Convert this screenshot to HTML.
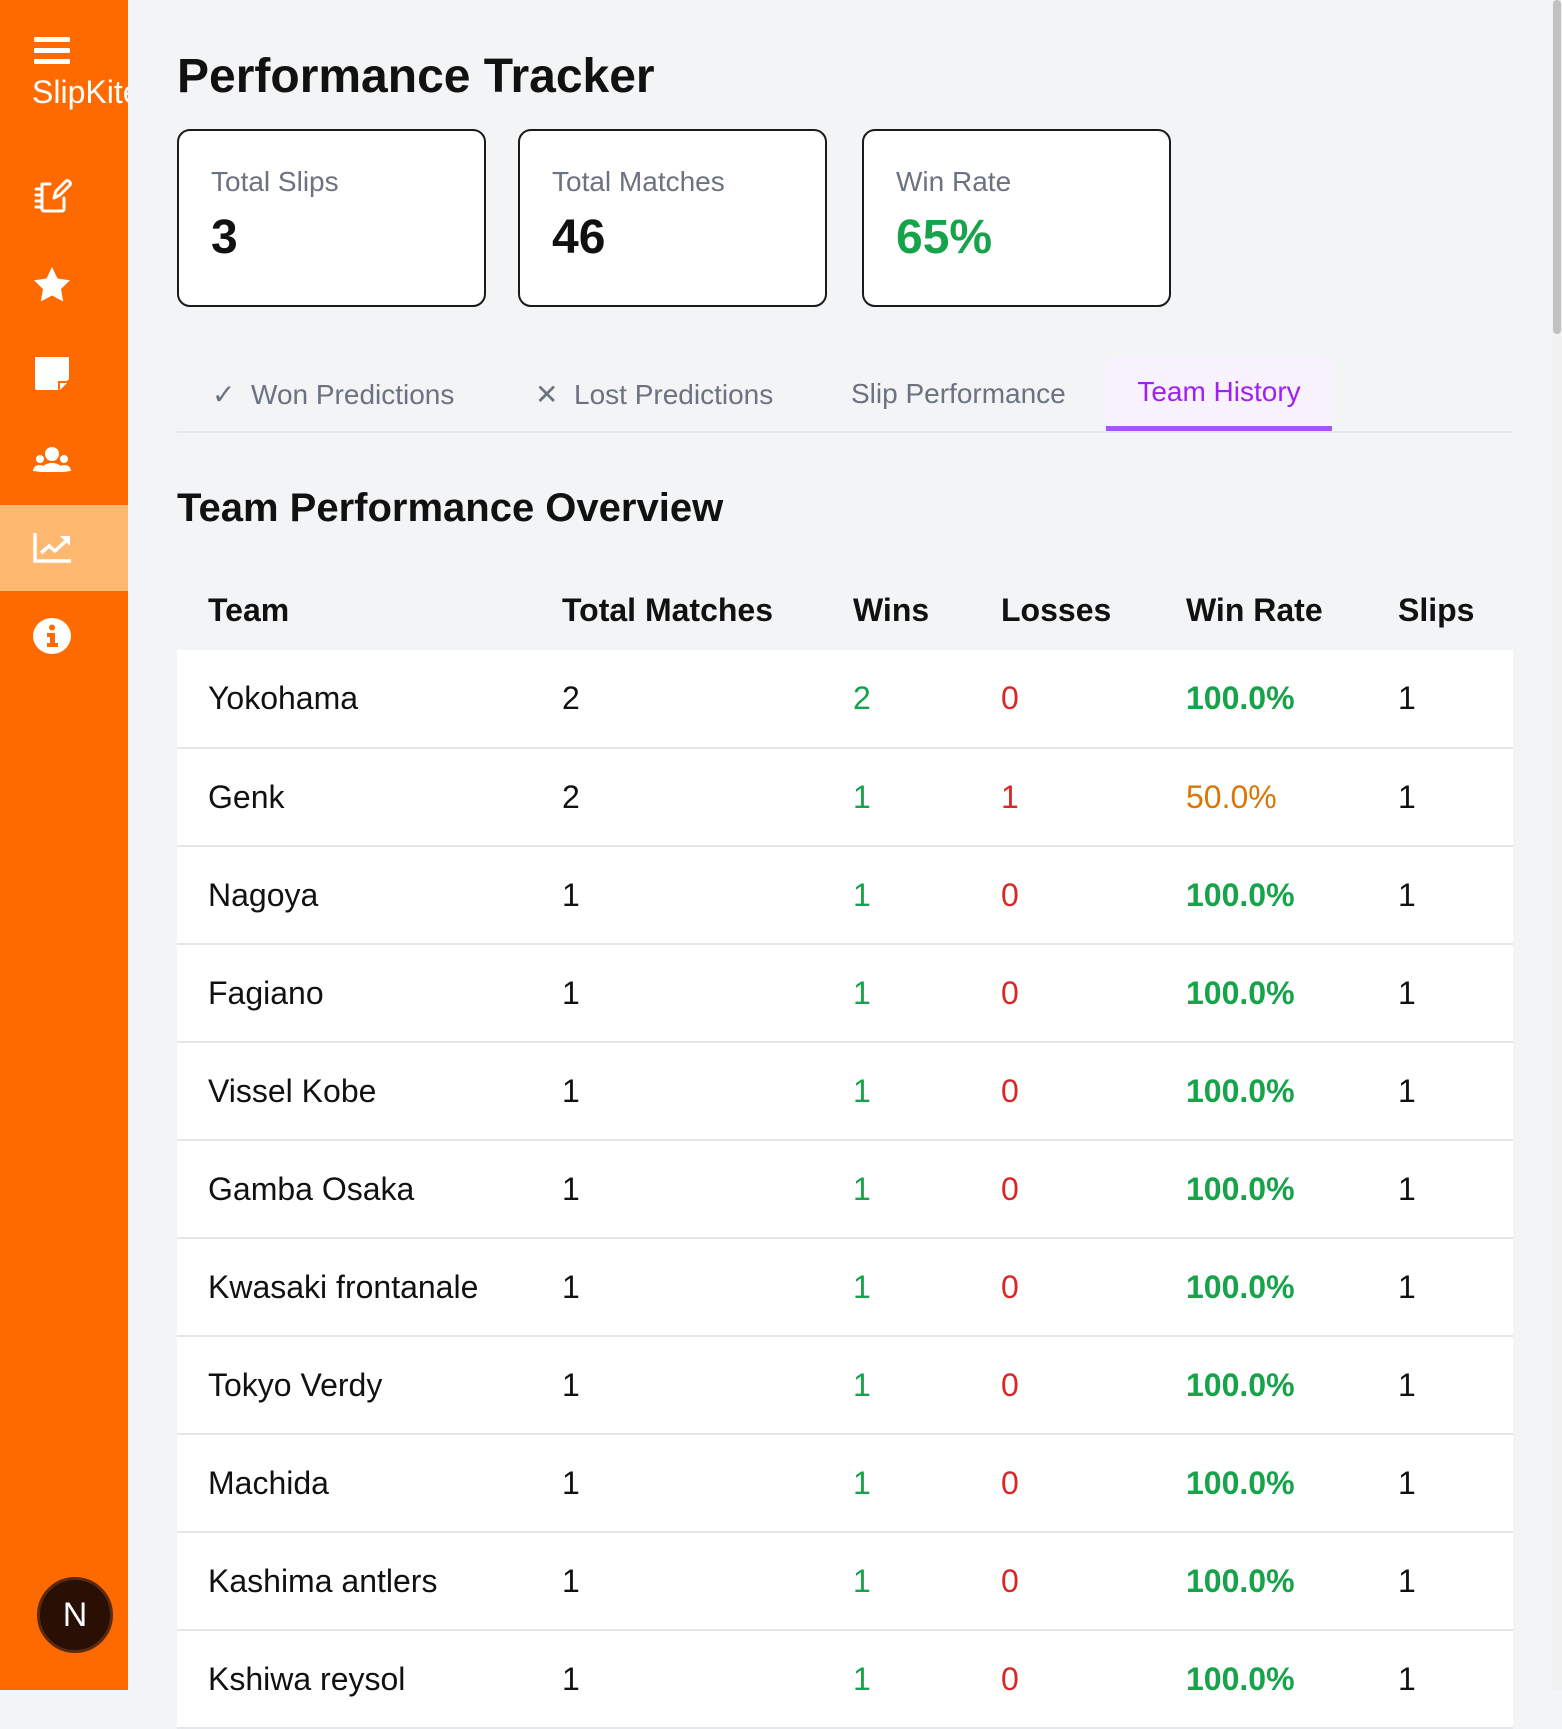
<!DOCTYPE html>
<html><head><meta charset="utf-8"><style>
*{box-sizing:border-box;margin:0;padding:0}
body{width:1562px;height:1690px;overflow:hidden;background:#f3f4f6;font-family:"Liberation Sans",sans-serif;position:relative;color:#111}
.side{position:absolute;left:0;top:0;width:128px;height:1690px;background:#ff6a00;overflow:hidden}
.ham{position:absolute;left:34px;top:37px;width:36px}
.ham i{display:block;height:5px;background:#fff;margin-bottom:6px;border-radius:1px}
.logo{position:absolute;left:32px;top:74px;color:#fff;font-size:32px;white-space:nowrap}
.ic{position:absolute;left:32px;width:40px;height:40px}
.active{position:absolute;left:0;top:505px;width:128px;height:86px;background:#ffb870}
.av{position:absolute;left:37px;top:1577px;width:76px;height:76px;border-radius:50%;background:#2a0f05;border:3px solid #5a2a10;color:#fff;font-size:34px;text-align:center;line-height:70px}
h1{position:absolute;left:177px;top:49px;font-size:48px;font-weight:bold}
.card{position:absolute;top:129px;width:309px;height:178px;background:#fff;border:2px solid #1a1a1a;border-radius:13px;padding:35px 0 0 32px}
.card .l{font-size:28px;color:#6b7280}
.card .v{font-size:48px;font-weight:bold;margin-top:12px}
.tab{position:absolute;top:378px;font-size:28px;color:#6b7280}
.tline{position:absolute;left:177px;top:431px;width:1336px;height:2px;background:#e5e7eb}
.th{position:absolute;left:1106px;top:357px;width:226px;height:74px;background:#f8f1fe;border-radius:10px 10px 0 0;border-bottom:5px solid #a855f7;color:#a020f0;font-size:28px;text-align:center;padding-top:19px}
h2{position:absolute;left:177px;top:486px;font-size:40px;font-weight:bold}
table{position:absolute;left:177px;top:574px;width:1336px;border-collapse:collapse;font-size:32px}
th{text-align:left;font-weight:bold;height:76px;padding-bottom:4px}
td{background:#fff;height:98px;border-bottom:2px solid #e5e7eb}
th:first-child,td:first-child{padding-left:31px}
.g{color:#16a34a}.r{color:#dc2626}.gb{color:#16a34a;font-weight:bold}.o{color:#d97706}
.sb{position:absolute;right:0;top:0;width:10px;height:1690px;background:#f1f1f1}
.sb i{display:block;width:8px;margin-left:1px;height:334px;background:#c1c1c1;border-radius:4px}
</style></head><body>
<div class="side">
<div class="ham"><i></i><i></i><i></i></div>
<div class="logo">SlipKite</div>
<svg class="ic" style="top:176px" viewBox="0 0 40 40" fill="none" stroke="#fff" stroke-width="3" stroke-linecap="round" stroke-linejoin="round"><path d="M10 8h8M10 8v25a2 2 0 0 0 2 2h18a2 2 0 0 0 2-2v-11"/><path d="M4 13h6M4 19h6M4 25h6M4 31h6"/><path d="M22 22l2-7 10-10a3 3 0 0 1 4 4L28 19z"/></svg>
<svg class="ic" style="top:265px" viewBox="0 0 40 40"><path fill="#fff" d="M20 2l5.5 11.5 12.5 1.7-9 8.8 2.2 12.5L20 30.5 8.8 36.5 11 24l-9-8.8 12.5-1.7z"/></svg>
<svg class="ic" style="top:353px" viewBox="0 0 40 40"><path fill="#fff" d="M3 4h34v22l-11 11H5a2 2 0 0 1-2-2z"/><path fill="#ff6a00" d="M26 37V28h9z"/><path fill="#fff" d="M28 30h7l-7 7z"/></svg>
<svg class="ic" style="top:441px" viewBox="0 0 40 40" fill="#fff"><circle cx="20" cy="13" r="7"/><circle cx="8" cy="18" r="4"/><circle cx="32" cy="18" r="4"/><path d="M9 31c0-6 5-9 11-9s11 3 11 9z"/><path d="M1 30c0-4 3-6 7-6 2 0 3 1 4 1l-3 6z"/><path d="M39 30c0-4-3-6-7-6-2 0-3 1-4 1l3 6z"/></svg>
<div class="active"></div>
<svg class="ic" style="top:528px" viewBox="0 0 40 40" fill="none" stroke="#fff" stroke-width="3.5"><path d="M3 5v28h36"/><path d="M9 25l8-7 6 5 12-11" stroke-linejoin="round"/><path fill="#fff" stroke="none" d="M28 8h10v10z"/></svg>
<svg class="ic" style="top:616px" viewBox="0 0 40 40"><ellipse cx="20" cy="20" rx="19" ry="18" fill="#fff"/><circle cx="20" cy="11.5" r="3" fill="#ff6a00"/><path fill="#ff6a00" d="M15 17h8v10h3v4H15v-4h3v-6h-3z"/></svg>
<div class="av">N</div>
</div>
<h1>Performance Tracker</h1>
<div class="card" style="left:177px"><div class="l">Total Slips</div><div class="v">3</div></div>
<div class="card" style="left:518px"><div class="l">Total Matches</div><div class="v">46</div></div>
<div class="card" style="left:862px"><div class="l">Win Rate</div><div class="v" style="color:#16a34a">65%</div></div>
<div class="tab" style="left:212px">✓&nbsp;&nbsp;Won Predictions</div>
<div class="tab" style="left:535px">✕&nbsp;&nbsp;Lost Predictions</div>
<div class="tab" style="left:851px">Slip Performance</div>
<div class="tline"></div>
<div class="th">Team History</div>
<h2>Team Performance Overview</h2>
<table>
<colgroup><col style="width:385px"><col style="width:291px"><col style="width:148px"><col style="width:185px"><col style="width:212px"><col></colgroup>
<tr><th>Team</th><th>Total Matches</th><th>Wins</th><th>Losses</th><th>Win Rate</th><th>Slips</th></tr>
<tr><td>Yokohama</td><td>2</td><td class="g">2</td><td class="r">0</td><td class="gb">100.0%</td><td>1</td></tr>
<tr><td>Genk</td><td>2</td><td class="g">1</td><td class="r">1</td><td class="o">50.0%</td><td>1</td></tr>
<tr><td>Nagoya</td><td>1</td><td class="g">1</td><td class="r">0</td><td class="gb">100.0%</td><td>1</td></tr>
<tr><td>Fagiano</td><td>1</td><td class="g">1</td><td class="r">0</td><td class="gb">100.0%</td><td>1</td></tr>
<tr><td>Vissel Kobe</td><td>1</td><td class="g">1</td><td class="r">0</td><td class="gb">100.0%</td><td>1</td></tr>
<tr><td>Gamba Osaka</td><td>1</td><td class="g">1</td><td class="r">0</td><td class="gb">100.0%</td><td>1</td></tr>
<tr><td>Kwasaki frontanale</td><td>1</td><td class="g">1</td><td class="r">0</td><td class="gb">100.0%</td><td>1</td></tr>
<tr><td>Tokyo Verdy</td><td>1</td><td class="g">1</td><td class="r">0</td><td class="gb">100.0%</td><td>1</td></tr>
<tr><td>Machida</td><td>1</td><td class="g">1</td><td class="r">0</td><td class="gb">100.0%</td><td>1</td></tr>
<tr><td>Kashima antlers</td><td>1</td><td class="g">1</td><td class="r">0</td><td class="gb">100.0%</td><td>1</td></tr>
<tr><td>Kshiwa reysol</td><td>1</td><td class="g">1</td><td class="r">0</td><td class="gb">100.0%</td><td>1</td></tr>
</table>
<div class="sb"><i></i></div>
</body></html>
